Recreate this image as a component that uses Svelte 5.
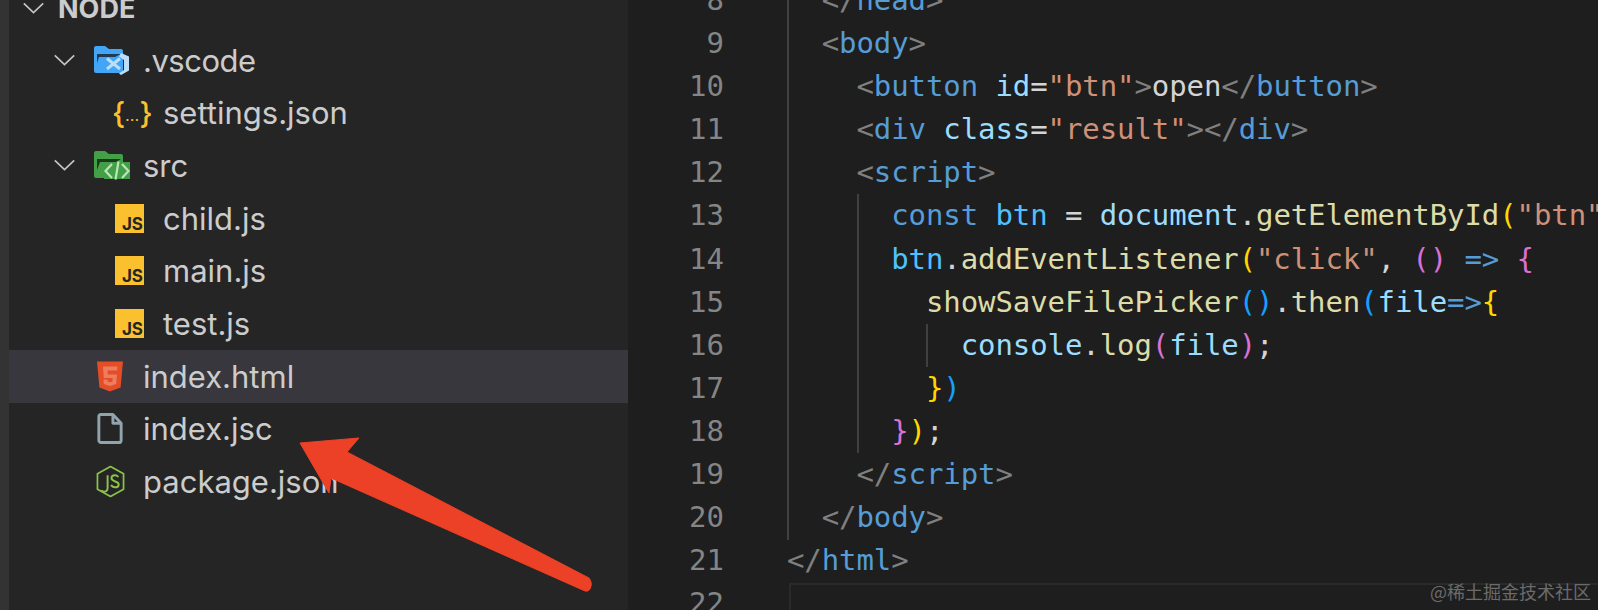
<script>
  const lines = [
    [8, [['p','  </'],['t','head'],['p','>']]],
    [9, [['p','  <'],['t','body'],['p','>']]],
    [10, [['p','    <'],['t','button'],['x',' '],['a','id'],['x','='],['s','"btn"'],['p','>'],['x','open'],['p','</'],['t','button'],['p','>']]],
    [11, [['p','    <'],['t','div'],['x',' '],['a','class'],['x','='],['s','"result"'],['p','></'],['t','div'],['p','>']]],
    [12, [['p','    <'],['t','script'],['p','>']]],
    [13, [['x','      '],['t','const'],['x',' '],['c','btn'],['x',' = '],['a','document'],['x','.'],['f','getElementById'],['g','('],['s','"btn"'],['g',')'],['x',';']]],
    [14, [['x','      '],['c','btn'],['x','.'],['f','addEventListener'],['g','('],['s','"click"'],['x',', '],['k','()'],['x',' '],['t','=>'],['x',' '],['k','{']]],
    [15, [['x','        '],['f','showSaveFilePicker'],['b','()'],['x','.'],['f','then'],['b','('],['a','file'],['t','=>'],['g','{']]],
    [16, [['x','          '],['a','console'],['x','.'],['f','log'],['k','('],['a','file'],['k',')'],['x',';']]],
    [17, [['x','        '],['g','}'],['b',')']]],
    [18, [['x','      '],['k','}'],['g',')'],['x',';']]],
    [19, [['p','    </'],['t','script'],['p','>']]],
    [20, [['p','  </'],['t','body'],['p','>']]],
    [21, [['p','</'],['t','html'],['p','>']]],
    [22, []]
  ];
</script>

{#snippet chevron()}
  <svg class="chev" viewBox="0 0 24 13" aria-hidden="true"><path d="M1.5 1.5 L12 11.5 L22.5 1.5" /></svg>
{/snippet}

<div class="page">
  <div class="strip"></div>

  <aside class="sidebar">
    <div class="row root">{@render chevron()}<span class="name bold">NODE</span></div>

    <div class="row folder">
      {@render chevron()}
      <svg class="ficon" viewBox="0 0 36 30" aria-hidden="true">
        <path fill="#42a5f5" d="M0 3a2 2 0 0 1 2-2h9l4 3h12a2 2 0 0 1 2 2v20a2 2 0 0 1-2 2H2a2 2 0 0 1-2-2z"/>
        <path fill="#1f3a52" d="M3 9h24l-6 3H5l-2 6z"/>
        <path fill="none" stroke="#bbdefb" stroke-width="3" d="M13 13.500l13 10.500M13 24l13-10.500"/>
        <path fill="#bbdefb" d="M27 8l8 3.500v14L27 30l-2-1.500 5-3.500V15l-5-3.500z"/>
      </svg>
      <span class="name vs">.vscode</span>
    </div>

    <div class="row file">
      <span class="jsonic"><span class="br">&#123;</span><span class="dots">...</span><span class="br">&#125;</span></span>
      <span class="name">settings.json</span>
    </div>

    <div class="row folder">
      {@render chevron()}
      <svg class="ficon" viewBox="0 0 36 30" aria-hidden="true">
        <path fill="#43a047" d="M0 3a2 2 0 0 1 2-2h9l4 3h12a2 2 0 0 1 2 2v20a2 2 0 0 1-2 2H2a2 2 0 0 1-2-2z"/>
        <path fill="#1c3a1e" d="M3 9h24l-5 3H6l-3 8z"/>
        <path fill="#43a047" d="M10 12h26v17H10z"/>
        <path fill="none" stroke="#b9e6bb" stroke-width="2.200" d="M18 14l-6.500 7 6.500 7M28 14l6.500 7-6.500 7M24.500 11.500l-3 18"/>
      </svg>
      <span class="name">src</span>
    </div>

    <div class="row file"><span class="js"><span>JS</span></span><span class="name">child.js</span></div>
    <div class="row file"><span class="js"><span>JS</span></span><span class="name">main.js</span></div>
    <div class="row file"><span class="js"><span>JS</span></span><span class="name">test.js</span></div>

    <div class="row top selected">
      <svg class="ticon" viewBox="0 0 26 30" aria-hidden="true">
        <path fill="#e44d26" d="M0 0h26l-2.400 26L13 30 2.400 26z"/>
        <path fill="#f4a58f" opacity=".55" d="M6 5h14.500l-.5 4H10.500l.3 4H20l-.8 9.500-6.200 2-6.200-2-.4-4.500h4l.2 2 2.400.7 2.400-.7.300-3.500H6.800z"/>
      </svg>
      <span class="name">index.html</span>
    </div>

    <div class="row top">
      <svg class="ticon" viewBox="0 0 26 32" aria-hidden="true">
        <path fill="none" stroke="#90a4ae" stroke-width="3" stroke-linejoin="round" d="M3.500 1.500H16L24.500 10.500V28a2.500 2.500 0 0 1-2.500 2.500H3.500A2.500 2.500 0 0 1 1.500 28V3.500a2 2 0 0 1 2-2zM16 1.500V10.500H24.500"/>
      </svg>
      <span class="name">index.jsc</span>
    </div>

    <div class="row top">
      <svg class="nicon" viewBox="0 0 30 34" aria-hidden="true">
        <path fill="none" stroke="#8bc34a" stroke-width="1.800" stroke-linejoin="round" d="M15 1.500L28.500 9v16L15 32.500 1.500 25V9z"/>
        <path fill="none" stroke="#8bc34a" stroke-width="2" d="M12 10.500v13c0 3-1.500 4-3.500 4s-2.500-.8-3-1.500"/>
        <path fill="none" stroke="#8bc34a" stroke-width="2" d="M23 12.500c-.8-1.500-2.200-2-3.500-2-2 0-3.500 1-3.500 3 0 4.500 7.500 2.500 7.500 6.500 0 2-1.600 3-3.800 3-2 0-3.400-1-4-2.500"/>
      </svg>
      <span class="name">package.json</span>
    </div>
  </aside>

  <main class="editor">
    {#each lines as [n, toks]}
      <div class="line">
        <span class="num">{n}</span>
        <span class="code" class:current={n === 22}>{#each toks as [c, t]}<span class={c}>{t}</span>{/each}</span>
      </div>
    {/each}
    <i class="guide g1"></i>
    <i class="guide g2"></i>
    <i class="guide g3"></i>
  </main>

  <svg class="arrow" viewBox="0 0 1598 610" aria-hidden="true">
    <path fill="#ec4126" stroke="#ec4126" stroke-width="1" stroke-linejoin="round" d="M300 443 L359 438 L347 452 L589 578 Q593 583 590 589 Q588 592 585 591 L331 478 L329 493 Z"/>
  </svg>
  <div class="mark">@稀土掘金技术社区</div>
</div>

<style>
  :global(body) { margin: 0; background: #1e1e1e; }
  .page {
    position: relative;
    display: flex;
    width: 1598px;
    height: 610px;
    overflow: hidden;
    background: #1e1e1e;
  }
  .strip { width: 9px; flex: none; background: #333333; }
  .sidebar {
    width: 619px;
    flex: none;
    background: #252526;
    margin-top: -19px;
    padding: 0;
    font-family: Inter, "Noto Sans", sans-serif;
  }
  .row {
    display: flex;
    align-items: center;
    height: 52.700px;
    box-sizing: border-box;
    color: #cccccc;
  }
  .name { font-size: 31px; line-height: 1; white-space: nowrap; }
  .vs { letter-spacing: -0.5px; }
  .bold { font-weight: 700; font-size: 27px; }
  .chev { width: 23px; height: 12px; flex: none; }
  .chev path { fill: none; stroke: #c5c5c5; stroke-width: 1.800; }
  .root { padding: 2px 0 0 13px; gap: 13px; }
  .folder { padding-left: 44px; }
  .ficon { width: 36px; height: 30px; flex: none; margin: 0 13px 0 18px; }
  .file { padding-left: 106px; }
  .js {
    width: 29px;
    height: 29px;
    flex: none;
    margin-right: 19px;
    display: flex;
    align-items: flex-end;
    justify-content: flex-end;
    background: #fbc02d;
    color: #252526;
    font-size: 17px;
    font-weight: 700;
    line-height: 1;
    padding: 0 1px 0 0;
    box-sizing: border-box;
  }
  .jsonic {
    width: 35px;
    margin: 0 16px 0 -3px;
    flex: none;
    display: flex;
    align-items: center;
    justify-content: space-between;
    color: #fbc02d;
    font-size: 30px;
    font-weight: 500;
    line-height: 1;
  }
  .jsonic .dots { font-size: 14px; margin-top: 6px; letter-spacing: 0.5px; }
  .top { padding-left: 88px; }
  .selected { background: #37373d; }
  .ticon { width: 26px; height: 31px; flex: none; margin: 0 20px 0 0; }
  .nicon { width: 29px; height: 33px; flex: none; margin: 0 18px 0 -1px; }

  .editor {
    position: relative;
    flex: 1;
    min-width: 0;
    margin-top: -21px;
    font-family: "DejaVu Sans Mono", "Liberation Mono", monospace;
    font-size: 29px;
  }
  .line { display: flex; height: 43.100px; line-height: 43.100px; white-space: pre; }
  .num { width: 96px; flex: none; text-align: right; color: #858585; }
  .code { margin-left: 63px; flex: 1; color: #d4d4d4; letter-spacing: -0.09px; }
  .current { border: 2px solid #2a2a2a; border-right: 0; margin-left: 65px; margin-top: 1px; height: 60px; box-sizing: border-box; }
  .p { color: #808080; }
  .t { color: #569cd6; }
  .a { color: #9cdcfe; }
  .s { color: #ce9178; }
  .x { color: #d4d4d4; }
  .c { color: #4fc1ff; }
  .f { color: #dcdcaa; }
  .g { color: #ffd700; }
  .k { color: #da70d6; }
  .b { color: #179fff; }

  .guide { position: absolute; width: 2px; background: #404040; }
  .g1 { left: 159px; top: 0; height: 561px; }
  .g2 { left: 229px; top: 215px; height: 259px; }
  .g3 { left: 298px; top: 345px; height: 43px; }

  .arrow { position: absolute; inset: 0; width: 1598px; height: 610px; pointer-events: none; }
  .mark {
    position: absolute;
    right: 7px;
    top: 580px;
    font-family: "Noto Sans CJK SC", sans-serif;
    font-size: 18px;
    line-height: 22px;
    color: #6b6b6b;
  }
</style>
